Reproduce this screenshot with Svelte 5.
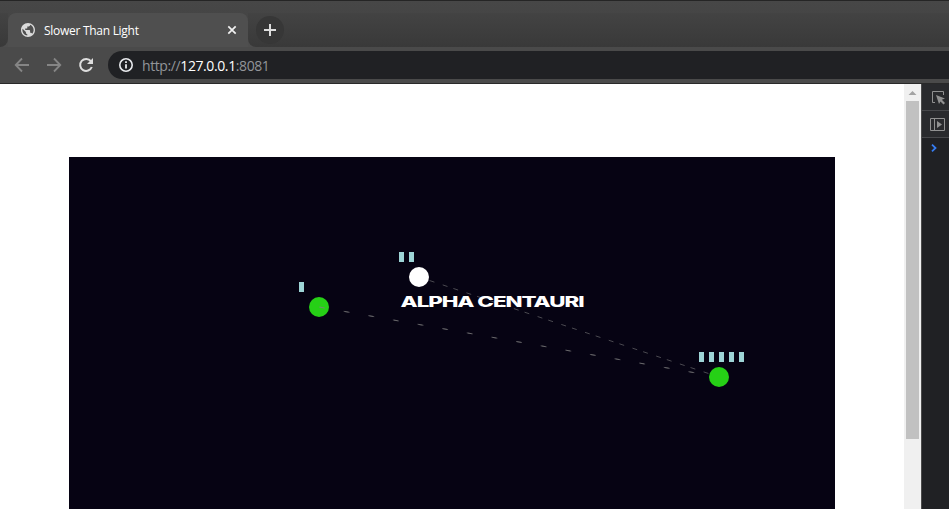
<script>
  const stars = [
    { x: 319, y: 307, fill: '#26d016', ships: 1 },
    { x: 419, y: 277, fill: '#ffffff', ships: 2 },
    { x: 719, y: 377, fill: '#26d016', ships: 5 }
  ];
  const routes = [[0, 2], [2, 0], [1, 2], [2, 1]];
</script>

<div class="window">
  <header>
    <div class="tabs">
      <div class="before"></div>
      <div class="tab">
        <svg width="14" height="14" viewBox="2 2 20 20"><path fill="#dadada" d="M12 2C6.48 2 2 6.48 2 12s4.48 10 10 10 10-4.48 10-10S17.52 2 12 2zm-1 17.93c-3.95-.49-7-3.85-7-7.93 0-.62.08-1.21.21-1.79L9 15v1c0 1.1.9 2 2 2v1.93zm6.9-2.54c-.26-.81-1-1.39-1.9-1.39h-1v-3c0-.55-.45-1-1-1H8v-2h2c.55 0 1-.45 1-1V7h2c1.1 0 2-.9 2-2v-.41c2.93 1.19 5 4.06 5 7.41 0 2.08-.8 3.97-2.1 5.39z"/></svg>
        <span class="title">Slower Than Light</span>
        <svg class="close" width="10" height="10" viewBox="0 0 10 10"><path d="M1.3 1.3 8.7 8.7M8.7 1.3 1.3 8.7" stroke="#f1f1f1" stroke-width="1.7"/></svg>
      </div>
      <div class="after"><div class="new"><svg width="12" height="12" viewBox="0 0 12 12"><path d="M6 0V12M0 6H12" stroke="#dedede" stroke-width="2"/></svg></div></div>
    </div>
    <div class="toolbar">
      <svg width="16" height="16" viewBox="0 0 16 16"><path d="M15 8H2M8 1.5 1.7 8 8 14.5" fill="none" stroke="#858585" stroke-width="1.8"/></svg>
      <svg width="16" height="16" viewBox="0 0 16 16"><path d="M1 8H14M8 1.5 14.3 8 8 14.5" fill="none" stroke="#858585" stroke-width="1.8"/></svg>
      <svg width="16" height="16" viewBox="0 0 16 16"><path d="M12.9 4.2A6 6 0 1 0 13.8 10" fill="none" stroke="#dedede" stroke-width="2"/><path d="M15 1V7H9Z" fill="#dedede"/></svg>
      <div class="address">
        <svg width="14" height="14" viewBox="0 0 14 14"><circle cx="7" cy="7" r="6.2" fill="none" stroke="#e8eaed" stroke-width="1.6"/><path d="M7 6.2V10.5M7 3.3V5" stroke="#e8eaed" stroke-width="1.8"/></svg>
        <span class="url">http://<b>127.0.0.1</b>:8081</span>
      </div>
    </div>
  </header>
  <main>
    <div class="page">
      <svg class="space" width="766" height="352" viewBox="69 157 766 352">
        <rect x="69" y="157" width="766" height="352" fill="#060313"/>
        <circle cx="319" cy="307" r="10" fill={stars[0].fill}/>
        {#each routes as [a, b]}
          <line x1={stars[a].x} y1={stars[a].y} x2={stars[b].x} y2={stars[b].y} stroke="#828282" stroke-opacity=".55" stroke-dasharray="5 20"/>
        {/each}
        {#each stars as star, n}
          {#if n > 0}<circle cx={star.x} cy={star.y} r="10" fill={star.fill}/>{/if}
          {#each Array(star.ships) as _, i}
            <rect x={star.x - 20 + i * 10} y={star.y - 25} width="5" height="10" fill="#9dd4d6"/>
          {/each}
        {/each}
        <text x="400.5" y="307" textLength="183" lengthAdjust="spacingAndGlyphs">ALPHA CENTAURI</text>
      </svg>
    </div>
    <div class="scroll"><svg width="17" height="17"><path d="M4.5 11 8.5 7 12.5 11Z" fill="#a3a3a3"/></svg><div class="thumb"></div></div>
    <aside>
      <div class="tool"><svg width="16" height="16" viewBox="0 0 16 16"><path d="M5 13.5H2.5V2.5H13.5V6" fill="none" stroke="#919191"/><path d="M6 6 15 9.5 11.8 10.8 15 14 13.5 15.5 10.5 12.4 9 15Z" fill="#919191"/></svg></div>
      <div class="tool"><svg width="16" height="14" viewBox="0 0 16 14"><path d="M.5 1.5H14.5V13.5H.5ZM4.5 1.5V13.5" fill="none" stroke="#919191"/><path d="M7 4V11L12 7.5Z" fill="#919191"/></svg></div>
      <svg class="prompt" width="6" height="8" viewBox="0 0 6 8"><path d="M1 .7 4.5 4 1 7.3" fill="none" stroke="#367cf1" stroke-width="1.8"/></svg>
    </aside>
  </main>
</div>

<style>
  :global(body) { margin: 0; overflow: hidden; }
  svg { display: block; flex: none; }
  .window { width: 949px; height: 509px; overflow: hidden; background: #fff; font-family: "Open Sans", "Noto Sans", sans-serif; }
  header { height: 84px; box-sizing: border-box; border-top: 1px solid #252525; border-bottom: 1px solid #292929; background: #4b4b4b; }
  .tabs { height: 46px; display: flex; align-items: flex-end; background: linear-gradient(#474747, #414141); }
  .before { width: 8px; height: 34px; background: #4d4d4d; }
  .before::before { content: ""; display: block; width: 8px; height: 34px; border-radius: 0 0 8px; background: linear-gradient(#434343, #393939); }
  .tab { width: 240px; height: 34px; box-sizing: border-box; padding: 0 11px 0 13px; display: flex; align-items: center; border-radius: 8px 8px 0 0; background: #4f4f4f; color: #fff; font-size: 12px; }
  .title { margin-left: 9px; white-space: nowrap; letter-spacing: -.28px; }
  .close { margin-left: auto; }
  .after { width: 701px; height: 34px; background: #4d4d4d; }
  .after::before { content: ""; display: block; height: 34px; margin-bottom: -34px; border-radius: 0 0 0 8px; background: linear-gradient(#434343, #393939); }
  .new { position: relative; width: 28px; height: 28px; margin: 3px 0 0 8px; border-radius: 50%; background: #373737; display: flex; align-items: center; justify-content: center; }
  .toolbar { height: 36px; padding-left: 14px; display: flex; align-items: center; gap: 16px; background: #4a4a4a; }
  .address { width: 841px; flex: none; height: 28px; margin-left: -2px; padding-left: 11px; box-sizing: border-box; display: flex; align-items: center; gap: 9px; border-radius: 14px 0 0 14px; background: #202124; color: #929599; font-size: 14px; }
  .url { letter-spacing: -.4px; }
  .url b { color: #fff; font-weight: 400; }
  main { height: 425px; display: flex; }
  .page { width: 904px; padding: 73px 0 0 69px; box-sizing: border-box; }
  text { font: 800 15px Inter, sans-serif; letter-spacing: -.7px; fill: #fff; }
  .scroll { width: 17px; background: #f0f0f0; }
  .thumb { width: 13px; height: 338px; margin-left: 2px; background: #c1c1c1; }
  aside { width: 28px; box-sizing: border-box; border-left: 1px solid #4b4b4b; background: #202124; }
  .tool { display: flex; align-items: center; box-sizing: border-box; height: 27px; padding-left: 8px; background: #292a2d; border-bottom: 1px solid #47484b; }
  .prompt { margin: 6px 0 0 9px; }
</style>
